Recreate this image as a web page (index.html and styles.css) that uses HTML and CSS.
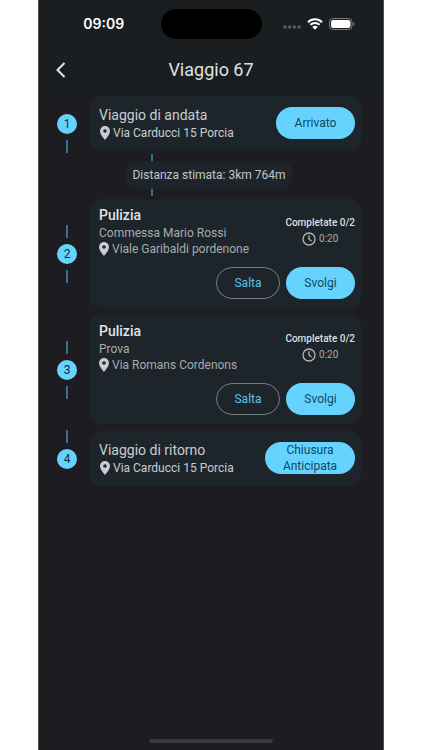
FILE: index.html
```html
<!DOCTYPE html>
<html lang="it">
<head>
<meta charset="utf-8">
<meta name="viewport" content="width=device-width, initial-scale=1">
<title>Viaggio 67</title>
<link rel="stylesheet" href="styles.css">
</head>
<body>
<svg class="sprite" aria-hidden="true">
  <symbol id="pin" viewBox="0 0 10 14"><path fill-rule="evenodd" d="M5 0a5 5 0 0 0-5 5c0 3.600 5 9 5 9s5-5.400 5-9a5 5 0 0 0-5-5zm0 3.200a1.800 1.800 0 1 1 0 3.600 1.800 1.800 0 0 1 0-3.600z"/></symbol>
  <symbol id="clock" viewBox="0 0 14 14"><circle cx="7" cy="7" r="6"/><path d="M7 3.200v4l2.600 1.800"/></symbol>
</svg>
<div class="phone">
  <header class="top">
    <div class="status">
      <span class="time">09:09</span>
      <span class="island"></span>
      <span class="signals">
        <svg width="18" height="4" viewBox="0 0 18 4" class="dots"><circle cx="2" cy="2" r="1.700"/><circle cx="6.700" cy="2" r="1.700"/><circle cx="11.400" cy="2" r="1.700"/><circle cx="16.100" cy="2" r="1.700"/></svg>
        <svg width="16" height="12" viewBox="0 0 16 12" class="wifi"><path d="M1 4.200a10 10 0 0 1 14 0M3.400 6.800a6.600 6.600 0 0 1 9.200 0"/><path class="core" d="M5.300 8.900a4 4 0 0 1 5.400 0L8 11.700z"/></svg>
        <svg width="26" height="12" viewBox="0 0 26 12"><rect class="shell" x=".5" y=".5" width="22.500" height="11" rx="3.500"/><rect class="charge" x="2" y="2" width="19.500" height="8" rx="2.200"/><path class="nub" d="M24 4v4q1.500-.6 1.500-2T24 4z"/></svg>
      </span>
    </div>
    <div class="bar">
      <button class="back" type="button" aria-label="Indietro"><svg width="10" height="16" viewBox="0 0 10 16"><path d="M8.500 1 1.500 8l7 7"/></svg></button>
      <h1>Viaggio 67</h1>
    </div>
  </header>
  <main>
    <ol class="steps">
      <li class="step">
        <div class="rail"><span class="badge">1</span><i class="line after"></i></div>
        <article class="card trip">
          <div>
            <h2>Viaggio di andata</h2>
            <p class="place"><svg class="pin"><use href="#pin"/></svg>Via Carducci 15 Porcia</p>
          </div>
          <button class="btn filled" type="button">Arrivato</button>
        </article>
      </li>
      <li class="distance"><i class="tick"></i><p>Distanza stimata: 3km 764m</p><i class="tick"></i></li>
      <li class="step">
        <div class="rail"><i class="line before"></i><span class="badge">2</span><i class="line after"></i></div>
        <article class="card job">
          <div class="info">
            <div>
              <h2>Pulizia</h2>
              <p>Commessa Mario Rossi</p>
              <p class="place"><svg class="pin"><use href="#pin"/></svg>Viale Garibaldi pordenone</p>
            </div>
            <div class="progress"><strong>Completate 0/2</strong><span><svg class="clock"><use href="#clock"/></svg>0:20</span></div>
          </div>
          <div class="actions"><button class="btn outlined" type="button">Salta</button><button class="btn filled" type="button">Svolgi</button></div>
        </article>
      </li>
      <li class="step">
        <div class="rail"><i class="line before"></i><span class="badge">3</span><i class="line after"></i></div>
        <article class="card job">
          <div class="info">
            <div>
              <h2>Pulizia</h2>
              <p>Prova</p>
              <p class="place"><svg class="pin"><use href="#pin"/></svg>Via Romans Cordenons</p>
            </div>
            <div class="progress"><strong>Completate 0/2</strong><span><svg class="clock"><use href="#clock"/></svg>0:20</span></div>
          </div>
          <div class="actions"><button class="btn outlined" type="button">Salta</button><button class="btn filled" type="button">Svolgi</button></div>
        </article>
      </li>
      <li class="step">
        <div class="rail"><i class="line before"></i><span class="badge">4</span></div>
        <article class="card trip">
          <div>
            <h2>Viaggio di ritorno</h2>
            <p class="place"><svg class="pin"><use href="#pin"/></svg>Via Carducci 15 Porcia</p>
          </div>
          <button class="btn filled wide" type="button">Chiusura<br>Anticipata</button>
        </article>
      </li>
    </ol>
  </main>
  <div class="home"></div>
</div>
</body>
</html>
```
FILE: styles.css
```css
* { box-sizing: border-box; }
body { margin: 0; background: #fff; font-family: Roboto, sans-serif; font-size: 12px; line-height: 16px; color: #c3c7ca; }
h1, h2, p, ol { margin: 0; padding: 0; font-weight: 400; }
button { font: inherit; color: inherit; background: none; border: 0; padding: 0; cursor: pointer; }
svg { display: block; flex: none; }
.sprite { position: absolute; width: 0; height: 0; }

.phone { display: flex; flex-direction: column; min-height: 100vh; margin: 0 38px; background: #1d1c20; border: solid #505154; border-width: 0 1px; }
.top { background: #1a1e20; height: 92px; }
.status { display: grid; grid-template-columns: 1fr 101px 1fr; align-items: center; height: 48px; }
.time { padding-left: 8px; text-align: center; font: 600 14px/18px Inter, sans-serif; color: #fff; }
.island { height: 30px; border-radius: 15px; background: #000; }
.signals { display: flex; align-items: center; gap: 6px; padding-left: 21px; }
.dots { align-self: flex-end; margin-bottom: 1px; fill: #5b5e60; }
.wifi { fill: none; stroke: #fff; stroke-width: 2; }
.wifi .core { fill: #fff; stroke: none; }
.shell { fill: none; stroke: #77797b; }
.charge { fill: #fff; }
.nub { fill: #77797b; }
.bar { display: grid; grid-template-columns: 44px 1fr 44px; align-items: center; height: 44px; }
.back { display: grid; place-items: center; height: 44px; }
.back svg { fill: none; stroke: #e4e6e8; stroke-width: 2; }
h1 { font-size: 18px; line-height: 24px; text-align: center; color: #dfe2e4; }

main { flex: 1; padding: 4px 22px 16px 18px; }
.steps { display: grid; gap: 7px; list-style: none; }
.step { display: grid; grid-template-columns: 20px 1fr; gap: 13px; align-items: center; }
.rail { display: grid; grid-template-rows: 13px 20px 13px; gap: 6px; justify-items: center; margin: -2px 0; }
.badge { grid-row: 2; width: 20px; height: 20px; border-radius: 50%; background: #66d3ff; color: #0b2d3b; line-height: 20px; text-align: center; }
.line { width: 2px; background: #34718d; }
.before { grid-row: 1; }
.after { grid-row: 3; }
.card { border-radius: 10px; background: #1d252a; padding: 6px 6px 9px 9px; }
.trip { display: flex; align-items: center; justify-content: space-between; min-height: 55px; padding-block: 0 2px; }
.trip h2 { font-size: 14px; line-height: 20px; color: #c9cdd0; }
.trip .place { color: #c9cdd0; padding-left: 1px; }
.place { display: flex; align-items: center; gap: 3px; }
.pin { width: 10px; height: 14px; fill: #c9cdd3; }
.btn { height: 32px; border-radius: 16px; min-width: 64px; }
.filled { background: #66d3ff; color: #0c4a62; min-width: 69px; }
.trip .filled { min-width: 79px; }
.trip .wide { min-width: 90px; }
.outlined { border: 1px solid #777d82; color: #5cc3ec; }
.job { min-height: 109px; display: grid; align-content: space-between; }
.job p { color: #a6abaf; }
.job h2 { font-size: 14px; line-height: 20px; font-weight: 500; color: #e0e3e5; }
.info { display: flex; justify-content: space-between; align-items: center; }
.progress { display: grid; justify-items: center; font-size: 10px; color: #a6abaf; }
.progress strong { font-weight: 500; color: #dcdfe1; }
.progress span { display: flex; align-items: center; gap: 3px; }
.clock { width: 14px; height: 14px; fill: none; stroke: #b2b7ba; stroke-width: 1.3; }
.actions { display: flex; justify-content: flex-end; gap: 6px; }
.distance { justify-self: center; display: grid; margin: -4px 0; }
.distance p { padding: 6px; border-radius: 10px; background: #1d252a; color: #c3c7ca; }
.tick { width: 2px; height: 7px; margin-left: 25px; background: #34718d; }
.home { width: 36%; height: 4px; margin: 0 auto 7px; border-radius: 2px; background: #39383b; }
```
